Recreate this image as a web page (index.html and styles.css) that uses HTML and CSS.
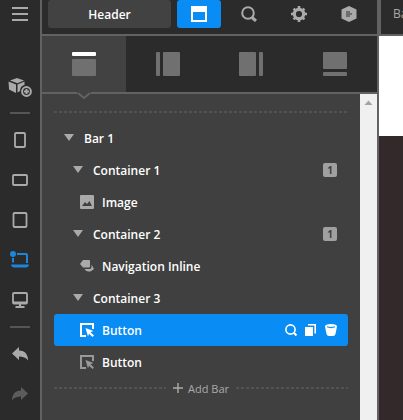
FILE: index.html
```
<!DOCTYPE html>
<html lang="en">
<head>
    <meta charset="UTF-8">
    <meta name="viewport" content="width=device-width, initial-scale=1.0">
    <title>Header builder</title>
    <link rel="stylesheet" href="styles.css">
</head>
<body>
    <nav class="sidebar">
        <button class="tool menu" aria-label="Menu">
            <svg width="16" height="14"><path d="M0 1h16M0 7h16M0 13h16" stroke="#aaa" stroke-width="2"/></svg>
        </button>
        <button class="tool" aria-label="Add element">
            <svg width="24" height="24" viewBox="0 0 24 24">
                <path d="M9 4l7 2.500-6.500 2.800L2 6.500z" fill="#aaa"/>
                <path d="M.5 7.500l7.500 3v8.500L1 15.500z" fill="#aaa"/>
                <path d="M9.500 10.500l7-3v3.500c-3 .5-4.500 3-4.500 6l-2.500 1.500z" fill="#aaa"/>
                <circle cx="18.500" cy="17.500" r="4.400" fill="#2b2b2b" stroke="#aaa" stroke-width="2"/>
                <path d="M16 17.500h5M18.500 15v5" stroke="#aaa" stroke-width="2"/>
            </svg>
        </button>
        <hr class="rule">
        <button class="tool" aria-label="Tablet portrait">
            <svg width="12" height="16"><rect x="1" y="1" width="10" height="14" rx="1" fill="none" stroke="#aaa" stroke-width="1.800"/></svg>
        </button>
        <button class="tool" aria-label="Tablet landscape">
            <svg width="16" height="12"><rect x="1" y="1" width="14" height="10" rx="1" fill="none" stroke="#aaa" stroke-width="1.800"/></svg>
        </button>
        <button class="tool" aria-label="Small screen">
            <svg width="16" height="16"><rect x="1.500" y="1" width="13" height="14" rx="1" fill="none" stroke="#aaa" stroke-width="1.800"/></svg>
        </button>
        <button class="tool" aria-label="Laptop">
            <svg width="20" height="18" viewBox="0 0 20 18">
                <circle cx="3" cy="3" r="3" fill="#1c86dd"/>
                <path d="M3 7v4.500M7 3h9q1 0 1 1v8" fill="none" stroke="#1c86dd" stroke-width="2"/>
                <path d="M1 13.500h18q-.5 3-3 3H4q-2.500 0-3-3z" fill="#1c86dd"/>
            </svg>
        </button>
        <button class="tool" aria-label="Desktop">
            <svg width="16" height="16" viewBox="0 0 16 16">
                <rect x="1" y="1" width="14" height="10.500" rx="1" fill="none" stroke="#aaa" stroke-width="1.800"/>
                <path d="M1 10.500h14M8 11v4M3.500 15h9" stroke="#aaa" stroke-width="2"/>
            </svg>
        </button>
        <hr class="rule">
        <button class="tool" aria-label="Undo">
            <svg width="16" height="14"><path d="M0 6.500L7 0v3.500c6 0 9 4 9 10-2-3-5-4-9-4v3.500z" fill="#aaa"/></svg>
        </button>
        <button class="tool" aria-label="Redo">
            <svg width="16" height="14"><path d="M16 6.500L9 0v3.500c-6 0-9 4-9 10 2-3 5-4 9-4v3.500z" fill="#5c5c5c"/></svg>
        </button>
    </nav>

    <main class="panel">
        <div class="topbar">
            <button class="title">Header</button>
            <button class="icon-btn active" aria-label="Layout">
                <svg width="16" height="16"><path d="M0 0h16v16H0zM2 6v8h12V6z" fill="#fff" fill-rule="evenodd"/></svg>
            </button>
            <button class="icon-btn" aria-label="Search">
                <svg width="16" height="16"><circle cx="7" cy="7" r="5.800" fill="none" stroke="#aaa" stroke-width="2"/><path d="M11 11.500l4 3.500" stroke="#aaa" stroke-width="3"/></svg>
            </button>
            <button class="icon-btn" aria-label="Settings">
                <svg width="16" height="16" viewBox="0 0 16 16">
                    <circle cx="8" cy="8" r="4.700" fill="none" stroke="#aaa" stroke-width="3.200"/>
                    <path d="M8 0v3M8 13v3M0 8h3M13 8h3M2.600 2.600l2 2M11.400 11.400l2 2M2.600 13.400l2-2M11.400 4.600l2-2" stroke="#aaa" stroke-width="2.600"/>
                </svg>
            </button>
            <button class="icon-btn" aria-label="Presets">
                <svg width="16" height="16"><path d="M8 0l7.500 3.500v9L8 16 .5 12.500v-9z" fill="#aaa"/><path d="M5 6h4M5 8h6M5 10h4" stroke="#333" stroke-width="1.200"/></svg>
            </button>
        </div>

        <div class="tabs">
            <button class="tab active" aria-label="Top">
                <svg width="24" height="24"><rect width="24" height="4" rx="1" fill="#fff"/><rect y="7" width="24" height="17" rx="1" fill="#707070"/></svg>
                <svg class="notch" width="14" height="8"><path d="M0 0h14v1L7 7 0 1z" fill="#424242"/><path d="M1 1l6 5 6-5" fill="none" stroke="#626262" stroke-width="2"/></svg>
            </button>
            <button class="tab" aria-label="Left">
                <svg width="24" height="24"><rect width="4" height="24" rx="1" fill="#707070"/><rect x="7" width="17" height="24" rx="1" fill="#707070"/></svg>
            </button>
            <button class="tab" aria-label="Right">
                <svg width="24" height="24"><rect width="17" height="24" rx="1" fill="#707070"/><rect x="20" width="4" height="24" rx="1" fill="#707070"/></svg>
            </button>
            <button class="tab" aria-label="Bottom">
                <svg width="24" height="24"><rect width="24" height="17" rx="1" fill="#707070"/><rect y="20" width="24" height="4" rx="1" fill="#707070"/></svg>
            </button>
        </div>

        <div class="content">
            <div class="outline">
                <div class="dashes"></div>
                <ul class="tree">
                    <li class="row level-1"><span class="arrow"></span>Bar 1</li>
                    <li class="row level-2"><span class="arrow"></span>Container 1<span class="badge">1</span></li>
                    <li class="row level-3">
                        <svg width="14" height="14"><rect width="14" height="14" rx="1" fill="#aaa"/><path d="M2 11l3-4 2 2 2.500-3L12 11zM3 4.500h1.500" fill="#424242"/></svg>
                        Image
                    </li>
                    <li class="row level-2"><span class="arrow"></span>Container 2<span class="badge">1</span></li>
                    <li class="row level-3">
                        <svg width="14" height="14"><path d="M3 1h6q1 0 1 1v5q0 1.500-1 1.500H3L0 5z" fill="#aaa"/><path d="M11.500 5.500v2.500q0 2-2 2H4.500q1.500 2.500 4 2.500h2L14 10z" fill="#aaa"/></svg>
                        Navigation Inline
                    </li>
                    <li class="row level-2"><span class="arrow"></span>Container 3</li>
                    <li class="row level-3 selected">
                        <svg width="14" height="14"><path d="M6 13H1V1h12v5" fill="none" stroke="#fff" stroke-width="2"/><path d="M5.500 5l8 3-3 1.300 3.500 3.200-1.500 1.500-3.500-3.200L8 13.500z" fill="#fff"/></svg>
                        Button
                        <span class="actions">
                            <button aria-label="Find"><svg width="12" height="12"><circle cx="5.500" cy="5.500" r="4.600" fill="none" stroke="#fff" stroke-width="1.600"/><path d="M9 9l2.500 2.500" stroke="#fff" stroke-width="2"/></svg></button>
                            <button aria-label="Duplicate"><svg width="12" height="12"><path d="M0 3h8v9H0z" fill="#fff"/><path d="M3 .8h7.200V9.500" fill="none" stroke="#fff" stroke-width="1.600"/></svg></button>
                            <button aria-label="Delete"><svg width="12" height="12"><path d="M0 2.500Q0 0 6 0t6 2.500L10.500 10q-.5 2-2.500 2H4q-2 0-2.500-2z" fill="#fff"/><path d="M2 2.800q4 1.500 8 0" fill="none" stroke="#0a8cf5" stroke-width="1.200"/></svg></button>
                        </span>
                    </li>
                    <li class="row level-3">
                        <svg width="14" height="14"><path d="M6 13H1V1h12v5" fill="none" stroke="#999" stroke-width="2"/><path d="M5.500 5l8 3-3 1.300 3.500 3.200-1.500 1.500-3.500-3.200L8 13.500z" fill="#999"/></svg>
                        Button
                    </li>
                </ul>
                <div class="add-row">
                    <div class="dashes"></div>
                    <button class="add">
                        <svg width="10" height="10"><path d="M0 5h10M5 0v10" stroke="#aaa" stroke-width="1.400"/></svg>
                        Add Bar
                    </button>
                    <div class="dashes"></div>
                </div>
            </div>
            <div class="scrollbar">
                <svg width="17" height="17"><path d="M4.500 11l4-4.500 4 4.500z" fill="#a3a3a3"/></svg>
            </div>
        </div>
    </main>

    <section class="preview">
        <div class="preview-bar">Ba</div>
        <div class="preview-head"></div>
    </section>
</body>
</html>
```
FILE: styles.css
```
* {
    box-sizing: border-box;
}
body {
    margin: 0;
    min-height: 100vh;
    display: flex;
    overflow: hidden;
    background: #2b2b2b;
    color: #fff;
    font-family: "Open Sans", "Noto Sans", sans-serif;
    font-size: 12px;
    font-weight: 600;
}
button {
    margin: 0;
    padding: 0;
    border: 0;
    background: none;
    color: inherit;
    font: inherit;
    cursor: pointer;
}
svg {
    display: block;
    flex: none;
}

/* left tools */
.sidebar {
    flex: 0 0 42px;
    display: flex;
    flex-direction: column;
    border-right: 2px solid #626262;
}
.tool {
    height: 40px;
    display: flex;
    align-items: center;
    justify-content: center;
}
.tool.menu {
    height: 28px;
    margin-bottom: 38px;
}
.rule {
    width: 20px;
    height: 2px;
    margin: 6px auto;
    border: 0;
    background: #555;
}

/* main panel */
.panel {
    flex: 1;
    display: flex;
    flex-direction: column;
    border-right: 2px solid #626262;
}
.topbar {
    height: 36px;
    display: flex;
    gap: 6px;
    padding: 0 6px 6px;
    border-bottom: 2px solid #626262;
}
.title {
    flex: 1;
    height: 28px;
    background: #424242;
    border-radius: 3px;
}
.icon-btn {
    width: 44px;
    height: 28px;
    display: flex;
    align-items: center;
    justify-content: center;
}
.icon-btn.active {
    background: #0a8cf5;
    border-radius: 3px;
}
.tabs {
    height: 58px;
    display: flex;
    border-bottom: 2px solid #626262;
}
.tab {
    flex: 1;
    position: relative;
    display: flex;
    align-items: center;
    justify-content: center;
}
.tab.active {
    background: #424242;
}
.notch {
    position: absolute;
    bottom: -8px;
    left: calc(50% - 7px);
}
.content {
    flex: 1;
    display: flex;
    background: #404040;
}
.outline {
    flex: 1;
    padding: 17px 12px 0;
}
.dashes {
    flex: 1;
    height: 2px;
    background: repeating-linear-gradient(to right, #525252 0 3px, transparent 3px 5px);
}

/* tree */
.tree {
    margin: 9px 0 0;
    padding: 0;
    list-style: none;
}
.row {
    height: 32px;
    display: flex;
    align-items: center;
    gap: 8px;
    padding-right: 11px;
    border-radius: 3px;
}
.level-1 {
    padding-left: 10px;
}
.level-2 {
    padding-left: 19px;
}
.level-3 {
    padding-left: 26px;
}
.arrow {
    border: 5px solid transparent;
    border-top: 7px solid #aaa;
    border-bottom: 2px solid transparent;
    margin-right: 2px;
}
.badge {
    width: 14px;
    height: 14px;
    margin-left: auto;
    border-radius: 2px;
    background: #a0a0a0;
    color: #404040;
    font-size: 10px;
    font-weight: 700;
    line-height: 14px;
    text-align: center;
}
.selected {
    background: #0a8cf5;
}
.actions {
    display: flex;
    gap: 8px;
    margin-left: auto;
}
.add-row {
    height: 20px;
    display: flex;
    align-items: center;
    gap: 7px;
}
.add {
    display: flex;
    align-items: center;
    gap: 5px;
    color: #aaa;
    font-size: 11px;
    font-weight: 400;
}
.scrollbar {
    width: 17px;
    background: #f0f0f0;
}

/* page preview */
.preview {
    flex: 0 0 24px;
    overflow: hidden;
    background: #33292a;
}
.preview-bar {
    height: 36px;
    padding-left: 12px;
    border-left: 2px solid #626262;
    border-bottom: 2px solid #626262;
    background: #2b2b2b;
    color: #aaa;
    font-weight: 400;
    line-height: 28px;
}
.preview-head {
    height: 100px;
    background: #fff;
}
```
